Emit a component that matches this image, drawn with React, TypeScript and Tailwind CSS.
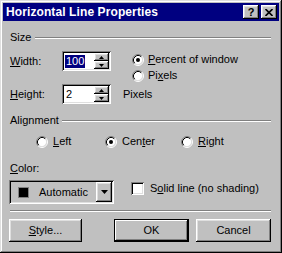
import React from 'react';

const raised =
  'shadow-[inset_-1px_-1px_#000,inset_1px_1px_#fff,inset_-2px_-2px_#808080,inset_2px_2px_#dfdfdf]';
const sunken =
  'shadow-[inset_1px_1px_#808080,inset_-1px_-1px_#fff,inset_2px_2px_#000,inset_-2px_-2px_#dfdfdf]';

const Radio: React.FC<{ checked?: boolean }> = ({ checked }) => (
  <svg width="12" height="12" viewBox="0 0 12 12" className="shrink-0">
    <circle cx="6" cy="6" r="4.5" fill="#fff" />
    <path d="M2.11 9.89 A5.5 5.5 0 0 1 9.89 2.11" stroke="#808080" fill="none" />
    <path d="M9.89 2.11 A5.5 5.5 0 0 1 2.11 9.89" stroke="#fff" fill="none" />
    <path d="M2.82 9.18 A4.5 4.5 0 0 1 9.18 2.82" stroke="#000" fill="none" />
    <path d="M9.18 2.82 A4.5 4.5 0 0 1 2.82 9.18" stroke="#dfdfdf" fill="none" />
    {checked && <circle cx="6" cy="6" r="2" fill="#000" />}
  </svg>
);

const Heading: React.FC<{ label: string; w: string }> = ({ label, w }) => (
  <div className="flex items-center h-[13px]">
    <span className={w}>{label}</span>
    <div className="flex-1 h-[2px] border-t border-[#808080] border-b border-b-white" />
  </div>
);

const Spin: React.FC = () => (
  <div className="flex flex-col w-[15px] h-[16px]">
    {[0, 1].map((i) => (
      <div key={i} className={`h-[8px] bg-[#c0c0c0] flex items-center justify-center ${raised}`}>
        <svg width="5" height="3" viewBox="0 0 5 3">
          {i === 0 ? <path d="M2.5 0 L5 3 L0 3 Z" fill="#000" /> : <path d="M0 0 L5 0 L2.5 3 Z" fill="#000" />}
        </svg>
      </div>
    ))}
  </div>
);

const Field: React.FC<{ children: React.ReactNode }> = ({ children }) => (
  <div className={`w-[49px] h-[20px] bg-white flex items-center justify-between p-[2px] ${sunken}`}>
    <div className="pl-[1px] flex items-center">{children}</div>
    <Spin />
  </div>
);

const Button: React.FC<{ children: React.ReactNode; isDefault?: boolean }> = ({ children, isDefault }) => (
  <div
    className={`w-[75px] h-[23px] flex items-center justify-center bg-[#c0c0c0] ${
      isDefault
        ? 'shadow-[inset_0_0_0_1px_#000,inset_-2px_-2px_#000,inset_2px_2px_#fff,inset_-3px_-3px_#808080]'
        : raised
    }`}
  >
    {children}
  </div>
);

export default function App() {
  return (
    <div className="w-[282px] h-[253px] bg-[#c0c0c0] p-[3px] font-['Liberation_Sans',sans-serif] text-[11px] leading-[13px] text-black shadow-[inset_-1px_-1px_#000,inset_1px_1px_#dfdfdf,inset_-2px_-2px_#808080,inset_2px_2px_#fff] select-none">
      {/* Title bar */}
      <div className="h-[18px] bg-[#000080] flex items-center justify-between">
        <span className="pl-[3px] text-white font-bold text-[12px] tracking-[0.1px]">Horizontal Line Properties</span>
        <div className="flex gap-[2px] mr-[2px]">
          <div className={`w-[16px] h-[14px] bg-[#c0c0c0] flex items-center justify-center font-bold text-[11px] leading-none ${raised}`}>
            ?
          </div>
          <div className={`w-[16px] h-[14px] bg-[#c0c0c0] flex items-center justify-center ${raised}`}>
            <svg width="8" height="7" viewBox="0 0 8 7">
              <path d="M0.5 0 L7.5 7 M7.5 0 L0.5 7" stroke="#000" strokeWidth="1.6" />
            </svg>
          </div>
        </div>
      </div>

      {/* Body */}
      <div className="pl-[7px] pr-[8px]">
        <div className="mt-[10px]">
          <Heading label="Size" w="w-[25px]" />
        </div>

        <div className="mt-[7px] flex h-[31px]">
          <div className="w-[52px] h-[20px] flex items-center">
            <span><u>W</u>idth:</span>
          </div>
          <Field>
            <span className="bg-[#000080] text-white px-[1px]">100</span>
          </Field>
          <div className="ml-[21px] pt-[2px] flex flex-col gap-[3px]">
            <div className="flex items-center gap-[4px]">
              <Radio checked />
              <span><u>P</u>ercent of window</span>
            </div>
            <div className="flex items-center gap-[4px]">
              <Radio />
              <span>Pi<u>x</u>els</span>
            </div>
          </div>
        </div>

        <div className="mt-[2px] flex items-center h-[20px]">
          <div className="w-[52px]">
            <span><u>H</u>eight:</span>
          </div>
          <Field>
            <span className="px-[1px]">2</span>
          </Field>
          <span className="ml-[12px]">Pixels</span>
        </div>

        <div className="mt-[10px]">
          <Heading label="Alignment" w="w-[52px]" />
        </div>

        <div className="mt-[8px] flex items-center h-[13px] pl-[26px]">
          <div className="w-[69px] flex items-center gap-[5px]">
            <Radio />
            <span><u>L</u>eft</span>
          </div>
          <div className="w-[76px] flex items-center gap-[5px]">
            <Radio checked />
            <span>Cen<u>t</u>er</span>
          </div>
          <div className="flex items-center gap-[5px]">
            <Radio />
            <span><u>R</u>ight</span>
          </div>
        </div>

        <div className="mt-[14px] h-[13px]">
          <span><u>C</u>olor:</span>
        </div>

        <div className="mt-[5px] flex items-start -ml-[1px]">
          <div className={`w-[105px] h-[24px] flex items-center p-[2px] ${sunken}`}>
            <div className="ml-[7px] w-[11px] h-[11px] bg-black border border-[#808080]" />
            <span className="ml-[10px] flex-1">Automatic</span>
            <div className={`w-[16px] h-[20px] bg-[#c0c0c0] flex items-center justify-center ${raised}`}>
              <svg width="7" height="4" viewBox="0 0 7 4">
                <path d="M0 0 L7 0 L3.5 4 Z" fill="#000" />
              </svg>
            </div>
          </div>
          <div className="ml-[17px] mt-[2px] flex items-center gap-[6px]">
            <div className={`w-[13px] h-[13px] bg-white ${sunken}`} />
            <span>S<u>o</u>lid line (no shading)</span>
          </div>
        </div>

        <div className="mt-[6px] h-[2px] border-t border-[#808080] border-b border-b-white" />

        <div className="mt-[7px] flex -ml-[1px]">
          <Button>
            <span><u>S</u>tyle...</span>
          </Button>
          <div className="ml-[32px]">
            <Button isDefault>OK</Button>
          </div>
          <div className="ml-[7px]">
            <Button>Cancel</Button>
          </div>
        </div>
      </div>
    </div>
  );
}
